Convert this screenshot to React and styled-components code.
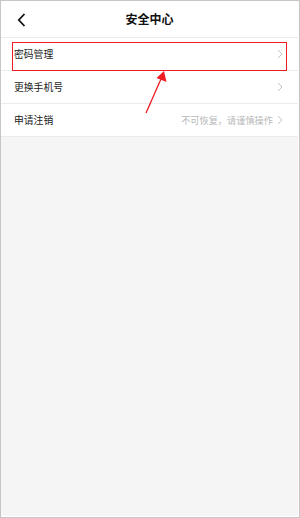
import React from "react";
import styled, { createGlobalStyle } from "styled-components";

const Global = createGlobalStyle`
  html, body { margin: 0; padding: 0; background: #fff; }
  body { font-family: "Noto Sans CJK SC", "Noto Sans", sans-serif; }
  * { box-sizing: border-box; }
`;

const Frame = styled.div`
  position: relative;
  width: 300px;
  height: 518px;
  border: 1px solid #c6c6c6;
  padding: 0 1px 1px 0;
  background: #fff;
  overflow: hidden;
`;

const Screen = styled.div`
  height: 100%;
  background: #f5f5f5;
  display: flex;
  flex-direction: column;
`;

const Header = styled.header`
  height: 37px;
  background: #fff;
  border-bottom: 1px solid #ebebeb;
  display: flex;
  align-items: center;
  justify-content: center;
  position: relative;
`;

const Back = styled.button`
  position: absolute;
  left: 13px;
  top: 11px;
  width: 14px;
  height: 16px;
  padding: 0;
  border: 0;
  background: none;
  display: flex;
  align-items: center;
  justify-content: center;
`;

const Title = styled.h1`
  margin: 0;
  font-size: 12px;
  font-weight: 700;
  color: #111;
  line-height: 1;
`;

const List = styled.div`
  background: #fff;
  display: flex;
  flex-direction: column;
`;

const Row = styled.div`
  height: 33px;
  padding: 0 15px 0 13px;
  display: flex;
  align-items: center;
  border-bottom: 1px solid #ebebeb;
`;

const Label = styled.span`
  flex: 1;
  font-size: 9.8px;
  color: #1a1a1a;
`;

const Hint = styled.span`
  font-size: 9.2px;
  color: #b8b8b8;
  margin-right: 4px;
`;

const Highlight = styled.div`
  position: absolute;
  left: 11px;
  top: 41px;
  width: 275px;
  height: 29px;
  border: 1.5px solid #ee1c25;
  pointer-events: none;
`;

const Pointer = styled.svg`
  position: absolute;
  left: 0;
  top: 0;
  pointer-events: none;
`;

const Chevron = () => (
  <svg width="6" height="10" viewBox="0 0 6 10">
    <path d="M1 1 L5 5 L1 9" fill="none" stroke="#c4c4c4" strokeWidth="1" />
  </svg>
);

const rows = [
  { label: "密码管理" },
  { label: "更换手机号" },
  { label: "申请注销", hint: "不可恢复，请谨慎操作" },
];

export default function App() {
  return (
    <>
      <Global />
      <Frame>
        <Screen>
          <Header>
            <Back aria-label="返回">
              <svg width="9" height="14" viewBox="0 0 9 14">
                <path d="M7.5 1 L1.8 7 L7.5 13" fill="none" stroke="#111" strokeWidth="1.8" />
              </svg>
            </Back>
            <Title>安全中心</Title>
          </Header>
          <List>
            {rows.map((r) => (
              <Row key={r.label}>
                <Label>{r.label}</Label>
                {r.hint && <Hint>{r.hint}</Hint>}
                <Chevron />
              </Row>
            ))}
          </List>
        </Screen>
        <Highlight />
        <Pointer width="300" height="518" viewBox="0 0 300 518">
          <line x1="145" y1="112" x2="160" y2="78" stroke="#ee1c25" strokeWidth="1.3" />
          <polygon points="163,70 165.5,81 155.5,77" fill="#ee1c25" />
        </Pointer>
      </Frame>
    </>
  );
}
